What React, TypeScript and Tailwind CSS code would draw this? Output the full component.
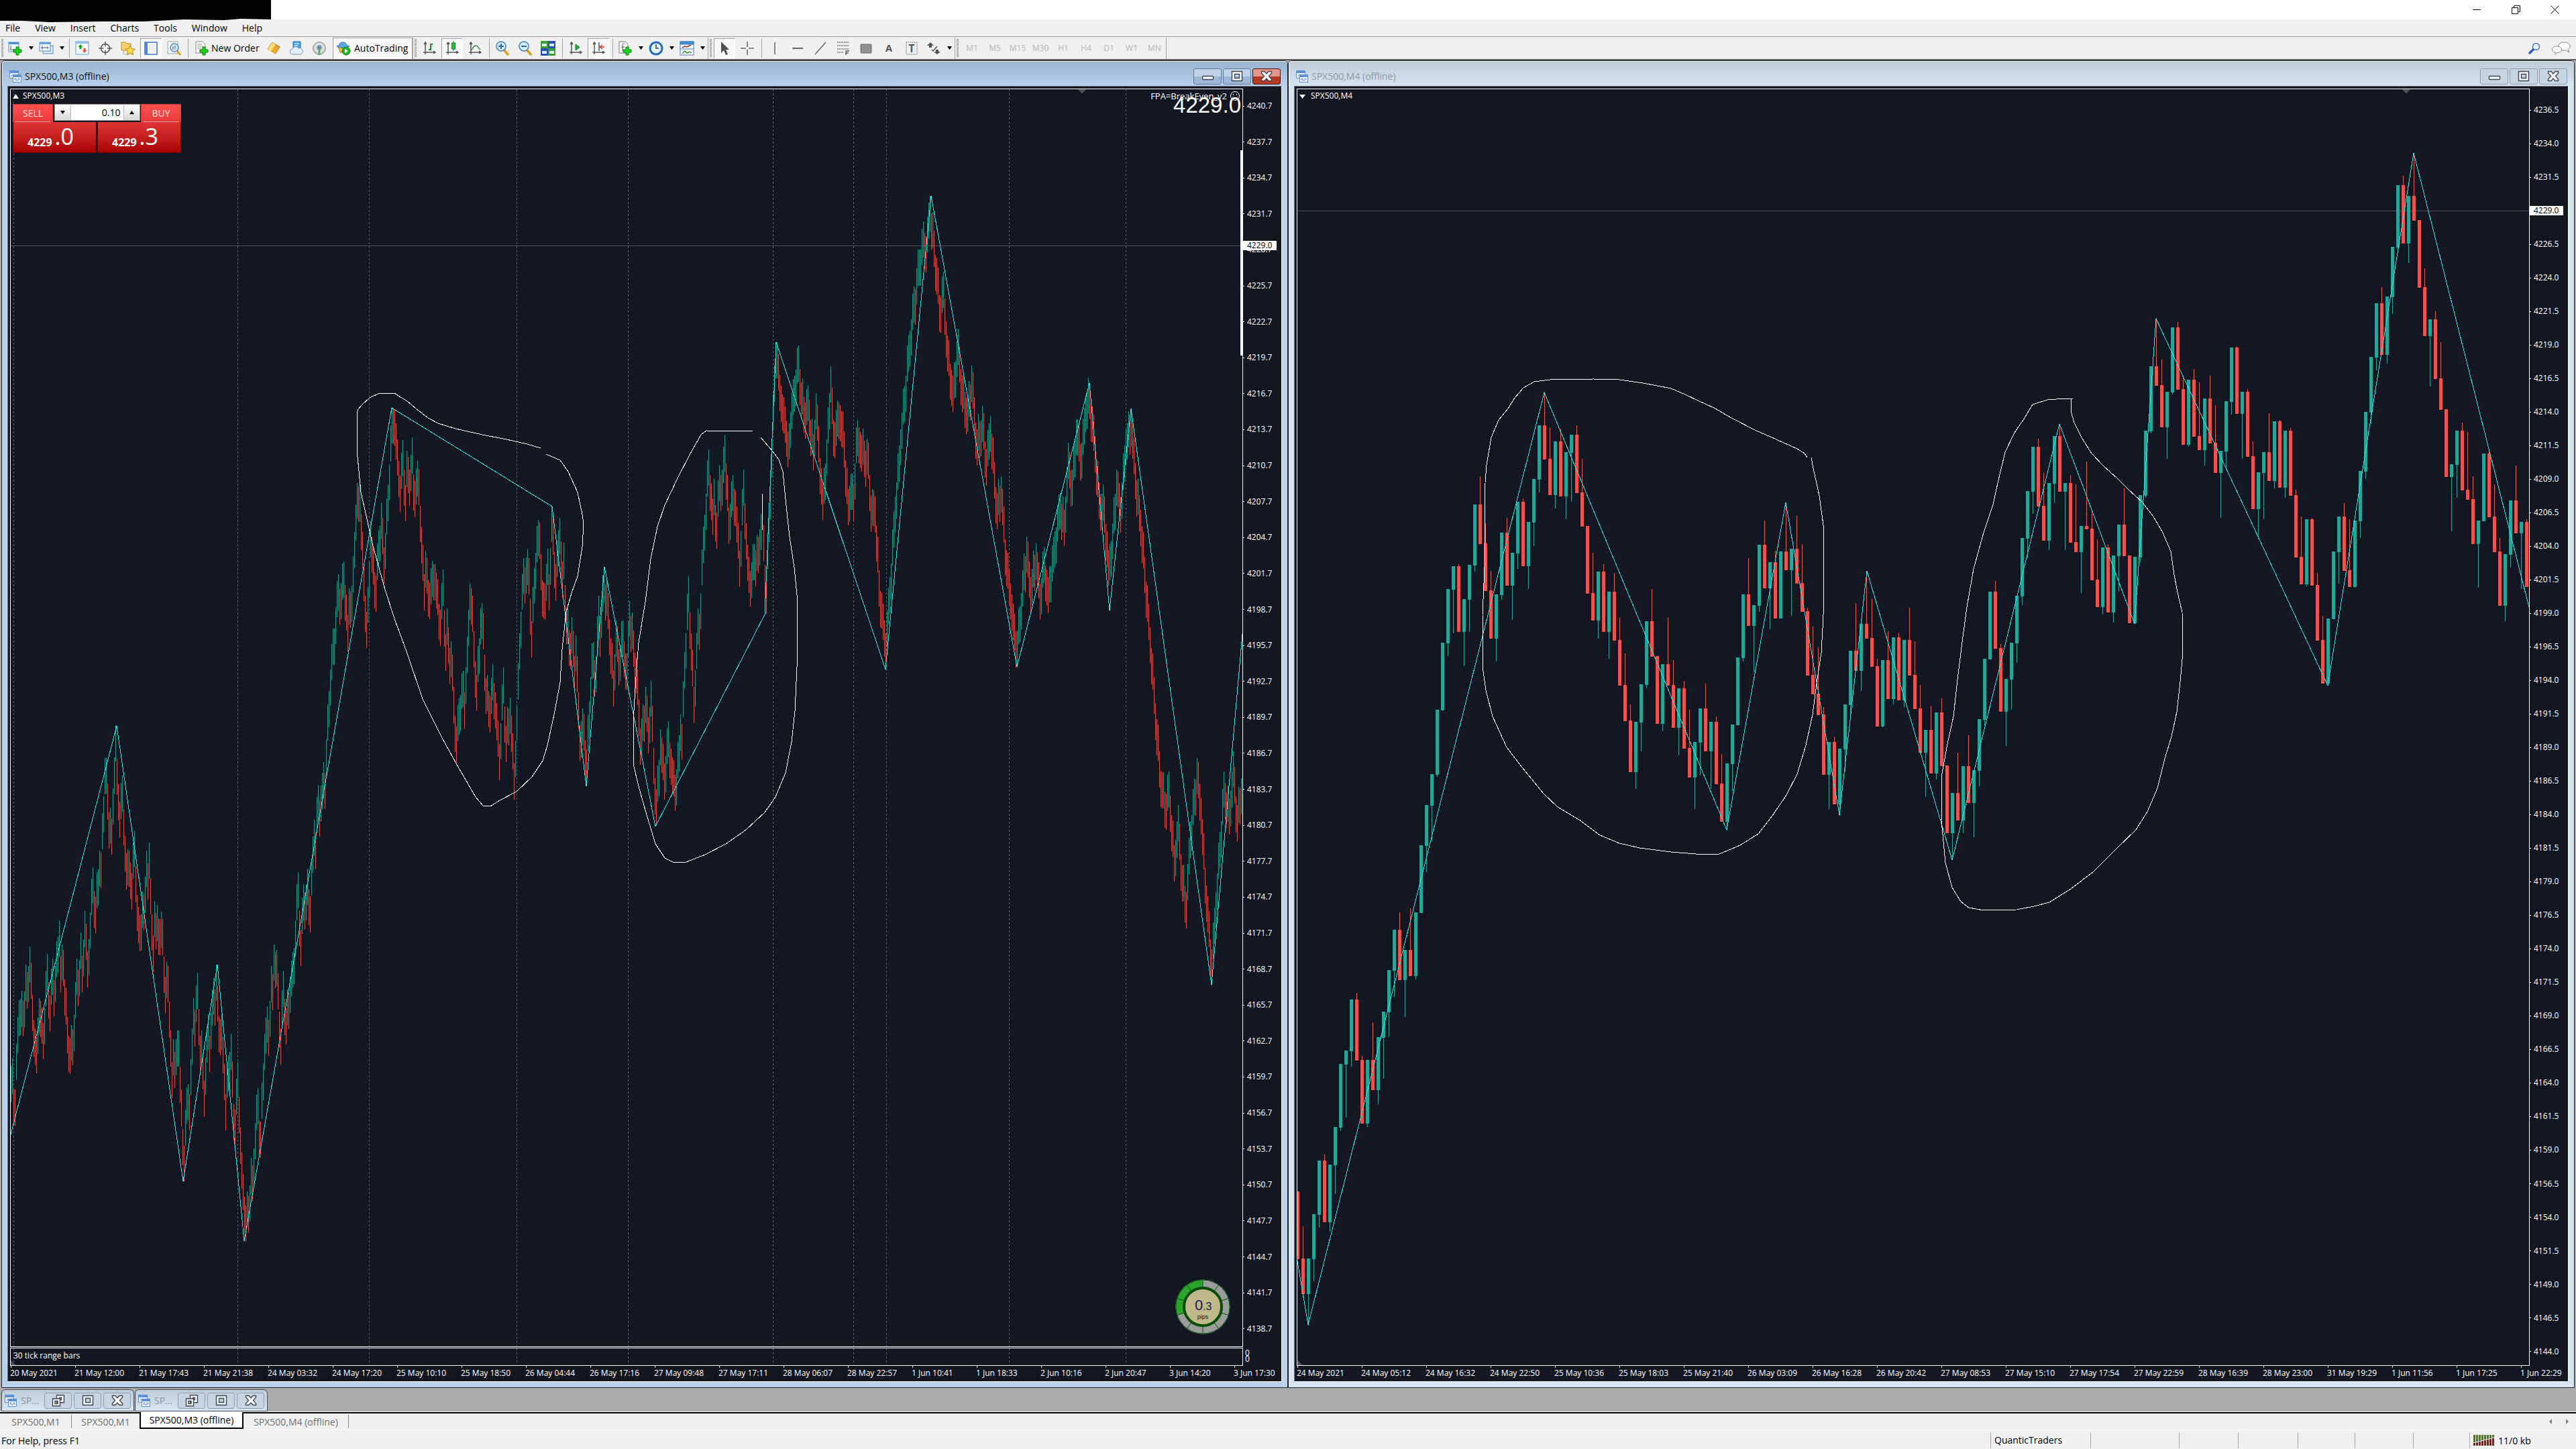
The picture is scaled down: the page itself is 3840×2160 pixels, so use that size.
import clsx from "clsx";
import type { ReactNode } from "react";

const UP = "#26a69a";
const DOWN = "#ef5350";
const ZIGZAG = "#35e0e2";

const M4_CLOSES = [
  1876, 1928, 1876, 1810, 1730, 1821, 1736, 1680, 1586, 1566, 1490, 1580, 1674, 1580, 1624, 1546, 1508, 1446, 1386, 1460,
  1416, 1454, 1360, 1260, 1200, 1154, 1058, 958, 878, 844, 941, 893, 842, 752, 810, 880, 951, 886, 794, 872, 824, 748,
  843, 778, 714, 634, 684, 737, 658, 739, 674, 648, 734, 784, 884, 924, 852, 941, 882, 954, 1021, 1074, 1150, 1076, 1020,
  926, 978, 1078, 990, 1021, 1084, 1026, 1115, 1158, 1106, 1056, 1119, 1076, 1168, 1224, 1138, 1080, 980, 886, 932, 902,
  812, 876, 838, 921, 822, 849, 818, 869, 911, 1006, 1034, 1065, 1154, 1106, 1198, 1116, 1050, 970, 999, 930, 951, 993,
  1082, 984, 1041, 950, 1043, 954, 1006, 1056, 1121, 1088, 1152, 1062, 1141, 1241, 1182, 1222, 1142, 1196, 1148, 1072,
  982, 882, 966, 1060, 1012, 958, 888, 802, 732, 666, 754, 805, 720, 650, 732, 720, 808, 822, 784, 788, 864, 904, 816,
  912, 828, 782, 828, 928, 830, 738, 642, 546, 574, 636, 584, 488, 580, 662, 566, 650, 670, 594, 660, 704, 672, 598, 518,
  616, 584, 680, 758, 704, 674, 716, 628, 726, 642, 738, 830, 870, 774, 872, 954, 1018, 922, 822, 770, 850, 874, 776,
  702, 614, 532, 452, 528, 442, 368, 276, 362, 292, 328, 428, 500, 476, 564, 610, 710, 692, 642, 730, 744, 810, 776, 676,
  770, 822, 902, 826, 746, 794, 778, 874,
];

// x, high pairs of the M3 range bars
const M3_HIGHS = [
  16, 1589, 18, 1577, 20, 1622, 22, 1624, 26, 1516, 28, 1491, 34, 1491, 38, 1438, 40, 1449, 44, 1411, 48, 1483, 52, 1533,
  54, 1546, 58, 1488, 62, 1502, 64, 1525, 70, 1422, 74, 1484, 78, 1429, 80, 1461, 88, 1372, 90, 1425, 94, 1416, 100, 1516,
  104, 1547, 108, 1534, 114, 1429, 116, 1446, 120, 1390, 122, 1425, 126, 1358, 130, 1418, 138, 1293, 142, 1337, 148, 1268,
  150, 1270, 156, 1130, 158, 1129, 160, 1168, 162, 1211, 164, 1204, 166, 1220, 170, 1129, 172, 1081, 174, 1131, 178, 1195,
  182, 1156, 184, 1206, 188, 1272, 192, 1268, 196, 1302, 198, 1256, 200, 1238, 202, 1291, 204, 1334, 210, 1363, 212, 1329,
  214, 1333, 218, 1268, 220, 1287, 222, 1256, 224, 1309, 226, 1363, 228, 1395, 230, 1343, 232, 1361, 240, 1359, 242, 1370,
  246, 1456, 250, 1440, 252, 1493, 256, 1583, 258, 1549, 260, 1568, 266, 1536, 268, 1590, 272, 1683, 274, 1708, 276, 1654,
  280, 1616, 282, 1631, 286, 1533, 288, 1488, 290, 1506, 294, 1450, 296, 1504, 298, 1544, 300, 1536, 304, 1611, 306, 1577,
  310, 1511, 312, 1544, 318, 1458, 320, 1475, 322, 1438, 326, 1515, 330, 1511, 334, 1586, 336, 1631, 338, 1583, 344, 1541,
  348, 1646, 350, 1654, 354, 1583, 356, 1635, 360, 1718, 364, 1784, 366, 1797, 370, 1783, 374, 1726, 376, 1737, 382, 1631,
  384, 1622, 386, 1670, 388, 1672, 394, 1541, 398, 1500, 400, 1520, 404, 1440, 406, 1452, 408, 1408, 412, 1416, 418, 1533,
  422, 1447, 426, 1503, 432, 1456, 438, 1413, 442, 1318, 444, 1300, 448, 1386, 452, 1318, 456, 1318, 458, 1295, 462, 1336,
  466, 1247, 468, 1222, 470, 1241, 472, 1188, 474, 1170, 476, 1193, 480, 1152, 482, 1136, 484, 1152, 486, 1102, 488, 1050,
  494, 960, 500, 906, 502, 866, 504, 856, 508, 869, 512, 837, 514, 872, 518, 917, 520, 877, 524, 873, 528, 793, 530, 752,
  532, 720, 536, 724, 538, 766, 542, 843, 546, 912, 548, 875, 552, 777, 554, 800, 560, 858, 564, 790, 568, 749, 572, 816,
  578, 723, 582, 634, 584, 607, 588, 611, 592, 655, 596, 709, 600, 656, 604, 723, 606, 672, 610, 700, 614, 652, 616, 707,
  620, 698, 624, 699, 628, 786, 632, 856, 634, 822, 638, 865, 644, 836, 648, 841, 656, 909, 660, 849, 664, 946, 666, 907,
  670, 966, 672, 956, 676, 1024, 680, 1083, 684, 1041, 690, 1000, 692, 1032, 696, 949, 700, 870, 704, 888, 706, 941, 710, 1006,
  716, 907, 720, 914, 724, 1011, 730, 1038, 734, 990, 738, 1032, 744, 1109, 750, 995, 754, 1082, 760, 1040, 766, 1138,
  770, 1050, 774, 944, 780, 832, 788, 832, 792, 926, 796, 846, 800, 784, 804, 779, 808, 865, 812, 870, 816, 818, 818, 856,
  822, 754, 828, 841, 834, 772, 838, 837, 840, 809, 844, 907, 850, 944, 852, 920, 856, 978, 858, 947, 864, 1080, 870, 1065,
  874, 1117, 882, 959, 888, 978, 892, 888, 894, 925, 900, 845, 906, 884, 914, 999, 918, 925, 922, 968, 926, 926, 934, 974,
  938, 895, 944, 940, 950, 997, 954, 1086, 960, 1052, 962, 1024, 966, 1069, 970, 1014, 974, 1115, 978, 1177, 982, 1133,
  984, 1087, 990, 1138, 996, 1075, 1002, 1129, 1008, 1147, 1014, 1065, 1016, 1079, 1020, 972, 1026, 859, 1034, 1024,
  1040, 907, 1042, 915, 1048, 785, 1056, 670, 1062, 743, 1064, 714, 1068, 764, 1072, 693, 1076, 700, 1080, 649, 1086, 757,
  1090, 717, 1096, 731, 1102, 821, 1108, 700, 1114, 812, 1118, 851, 1120, 838, 1124, 811, 1130, 800, 1136, 736, 1140, 842,
  1142, 861, 1146, 754, 1150, 657, 1154, 545, 1156, 510, 1160, 528, 1166, 588, 1170, 606, 1174, 643, 1178, 614, 1182, 565,
  1190, 515, 1192, 550, 1198, 591, 1202, 580, 1206, 596, 1212, 647, 1216, 586, 1224, 698, 1226, 721, 1232, 655, 1236, 586,
  1238, 546, 1242, 626, 1246, 611, 1252, 604, 1256, 614, 1264, 729, 1268, 706, 1272, 723, 1276, 637, 1282, 644, 1288, 657,
  1294, 660, 1298, 739, 1304, 740, 1310, 850, 1316, 900, 1320, 944, 1326, 860, 1334, 740, 1342, 640, 1354, 500, 1366, 400,
  1376, 330, 1380, 352, 1386, 292, 1396, 385, 1400, 440, 1406, 405, 1412, 500, 1420, 560, 1428, 490, 1434, 560, 1442, 590,
  1448, 545, 1456, 640, 1464, 605, 1470, 670, 1476, 620, 1486, 735, 1492, 710, 1500, 820, 1506, 870, 1510, 900, 1516, 940,
  1524, 850, 1530, 800, 1536, 860, 1544, 810, 1550, 870, 1556, 815, 1562, 860, 1570, 800, 1580, 735, 1586, 760, 1592, 660,
  1598, 700, 1604, 625, 1612, 660, 1618, 590, 1624, 571, 1632, 650, 1638, 720, 1646, 740, 1652, 820, 1658, 780, 1664, 700,
  1670, 740, 1678, 640, 1686, 612, 1692, 690, 1700, 760, 1706, 830, 1712, 900, 1720, 1010, 1728, 1120, 1736, 1180,
  1742, 1150, 1750, 1260, 1756, 1200, 1762, 1290, 1768, 1330, 1774, 1225, 1784, 1130, 1790, 1190, 1798, 1320, 1806, 1415,
  1812, 1330, 1818, 1240, 1824, 1150, 1832, 1190, 1838, 1120, 1844, 1200, 1850, 1160,
];

const M3_ZIGZAG =
  "16,1691 174,1082 273,1761 324,1438 364,1850 584,608 823,755 874,1172 901,845 977,1232 1140,916 1157,510 1320,998 1388,292 1516,994 1624,571 1654,910 1686,609 1806,1468 1852,945";
const M4_ZIGZAG =
  "1934,1880 1950,1975 2302,585 2574,1237 2662,749 2742,1215 2783,851 2910,1282 3070,632 3182,930 3214,475 3470,1022 3598,228 3770,905";

const M3_STROKES = [
  "806,668 786,662 755,655 719,648 679,639 653,631 638,623 620,609 607,598 597,592 588,586 566,586 551,593 540,603 534,610 532,616 532,670 538,734 546,769 555,810 574,879 589,925 606,971 630,1042 659,1100 680,1138 709,1188 720,1201 731,1202 745,1193 770,1180 793,1158 809,1134 816,1111 826,1065 835,1017 838,968 844,912 852,884 861,859 868,815 870,780 868,767 861,734 847,703 835,686 814,677",
  "1122,643 1053,642 1045,648 1028,678 1010,713 991,753 980,785 970,833 962,897 952,958 948,1009 944,1076 944,1139 952,1172 962,1208 977,1258 991,1279 1003,1285 1023,1285 1051,1274 1082,1258 1112,1237 1140,1211 1156,1188 1171,1152 1180,1106 1185,1060 1188,994 1188,887 1184,846 1177,800 1172,754 1167,703 1161,685 1151,672 1134,652",
  "1136,736 1136,790",
];
const M4_STROKES = [
  "2694,682 2690,676 2679,669 2639,651 2618,642 2581,623 2555,608 2533,598 2512,588 2491,579 2449,571 2414,566 2375,565 2311,566 2287,569 2271,578 2258,593 2248,609 2234,626 2223,652 2216,693 2213,733 2213,846 2210,917 2210,994 2215,1029 2225,1068 2246,1114 2269,1144 2301,1183 2322,1203 2354,1222 2385,1245 2414,1257 2444,1264 2491,1270 2528,1273 2563,1273 2594,1260 2621,1243 2642,1216 2663,1185 2679,1154 2692,1111 2702,1065 2708,1019 2715,973 2718,917 2719,790 2712,739 2703,698 2700,682",
  "3090,595 3078,594 3052,596 3030,603 3018,623 3003,645 2989,674 2978,720 2971,752 2957,794 2942,848 2932,905 2925,957 2918,1013 2912,1068 2903,1109 2895,1153 2894,1223 2900,1286 2910,1323 2923,1344 2935,1353 2957,1357 3006,1356 3032,1351 3055,1345 3087,1325 3121,1299 3156,1264 3184,1237 3201,1210 3216,1175 3227,1131 3237,1098 3245,1061 3250,1016 3254,972 3253,913 3246,883 3241,857 3236,822 3224,794 3210,770 3193,748 3173,730 3156,713 3135,694 3118,676 3104,654 3092,630 3087,613 3087,595",
];

const DAY_LINES = [20, 354, 550, 770, 936, 1152, 1272, 1321, 1504, 1678];

const M3_DATES = [
  "20 May 2021", "21 May 12:00", "21 May 17:43", "21 May 21:38", "24 May 03:32", "24 May 17:20", "25 May 10:10",
  "25 May 18:50", "26 May 04:44", "26 May 17:16", "27 May 09:48", "27 May 17:11", "28 May 06:07", "28 May 22:57",
  "1 Jun 10:41", "1 Jun 18:33", "2 Jun 10:16", "2 Jun 20:47", "3 Jun 14:20", "3 Jun 17:30",
];
const M4_DATES = [
  "24 May 2021", "24 May 05:12", "24 May 16:32", "24 May 22:50", "25 May 10:36", "25 May 18:03", "25 May 21:40",
  "26 May 03:09", "26 May 16:28", "26 May 20:42", "27 May 08:53", "27 May 15:10", "27 May 17:54", "27 May 22:59",
  "28 May 16:39", "28 May 23:00", "31 May 19:29", "1 Jun 11:56", "1 Jun 17:25", "1 Jun 22:29",
];

const M3_PRICES = Array.from({ length: 35 }, (_, i) => (4240.7 - i * 3).toFixed(1));
const M4_PRICES = Array.from({ length: 38 }, (_, i) => (4236.5 - i * 2.5).toFixed(1));

function rangeBars() {
  let up = "";
  let down = "";
  let k = 0;
  let prev = 1640;
  for (let x = 16; x <= 1850; x += 2) {
    while (k + 2 < M3_HIGHS.length && M3_HIGHS[k + 2] <= x) k += 2;
    const x0 = M3_HIGHS[k];
    const y0 = M3_HIGHS[k + 1];
    const x1 = M3_HIGHS[k + 2] ?? x0 + 2;
    const y1 = M3_HIGHS[k + 3] ?? y0;
    const wobble = x === x0 ? 0 : Math.round(Math.sin(x * 2.3) * 14);
    const y = Math.round(y0 + ((y1 - y0) * (x - x0)) / (x1 - x0)) + wobble;
    const bar = `M${x + 0.5} ${y}v54`;
    if (y <= prev) up += bar;
    else down += bar;
    prev = y;
  }
  return { up, down };
}

function Zigzag({ points }: { points: string }) {
  return <polyline points={points} fill="none" stroke={ZIGZAG} strokeWidth="1" />;
}

function Freehand({ strokes }: { strokes: string[] }) {
  return (
    <>
      {strokes.map((points) => (
        <polyline key={points} points={points} fill="none" stroke="#fff" />
      ))}
    </>
  );
}

function DayLines({ top, bottom }: { top: number; bottom: number }) {
  return (
    <>
      {DAY_LINES.map((x) => (
        <path key={x} d={`M${x + 0.5} ${top}V${bottom}`} stroke="#5a5e68" strokeDasharray="3 3" />
      ))}
    </>
  );
}

function M3Plot() {
  const { up, down } = rangeBars();
  return (
    <svg className="block h-full w-full" viewBox="16 133 1836 1874" preserveAspectRatio="none" shapeRendering="crispEdges">
      <DayLines top={133} bottom={2007} />
      <path d="M16 366.5H1852" stroke="#4d515b" />
      <path d="M1606 133h13l-6 6z" fill="#4a4d5c" />
      <path d={up} stroke="#27968d" />
      <path d={down} stroke="#d85152" />
      <Zigzag points={M3_ZIGZAG} />
      <Freehand strokes={M3_STROKES} />
      <path d="M1850.5 224V530" stroke="#fff" strokeWidth="3" />
    </svg>
  );
}

function M4Plot() {
  return (
    <svg className="block h-full w-full" viewBox="1934 133 1836 1902" preserveAspectRatio="none" shapeRendering="crispEdges">
      <path d="M1934 314.5H3770" stroke="#4d515b" />
      <path d="M3580 133h13l-6 6z" fill="#4a4d5c" />
      <path d="M1934 2028v7h7z" fill="#4a4d5c" />
      {M4_CLOSES.map((close, i) => {
        const open = i === 0 ? 1776 : M4_CLOSES[i - 1];
        const rising = close < open;
        const x = 1934 + i * 8;
        const top = rising ? close : close - 100;
        return (
          <g key={x} fill={rising ? UP : DOWN}>
            <rect x={x} y={top} width="1" height="100" />
            <rect x={x - 2} y={Math.min(open, close)} width="5" height={Math.abs(open - close) + 1} />
          </g>
        );
      })}
      <Zigzag points={M4_ZIGZAG} />
      <Freehand strokes={M4_STROKES} />
    </svg>
  );
}

function SpreadGauge() {
  return (
    <svg className="absolute right-[18px] bottom-[18px] size-[82px]" viewBox="-41 -41 82 82">
      <circle r="35" fill="none" stroke="#9c9c9c" strokeWidth="11" />
      <path d="M0-35A35 35 0 0 0-33.3 10.8" fill="none" stroke="#2ba52b" strokeWidth="11" />
      <circle r="40" fill="none" stroke="#0d5a14" />
      {Array.from({ length: 10 }, (_, i) => (
        <path key={i} d="M0-29V-41" stroke="#0d5a14" transform={`rotate(${i * 36})`} />
      ))}
      <circle r="28" fill="#bfb98a" stroke="#064d06" strokeWidth="4" />
      <text x="-12" y="5" fontSize="22" fill="#1c1a5e" fontFamily="Liberation Sans, sans-serif">0</text>
      <text x="0" y="5" fontSize="16" fill="#1c1a5e" fontFamily="Liberation Sans, sans-serif">.3</text>
      <text x="0" y="18" fontSize="9" fill="#111" textAnchor="middle" fontFamily="Liberation Sans, sans-serif">pips</text>
    </svg>
  );
}

function OneClickTrading() {
  return (
    <div className="absolute top-[22px] left-[3px] w-[251px] bg-[#131722] text-[#ffe4e0]">
      <div className="flex h-[27px] items-start justify-between">
        <button type="button" className="h-[27px] w-[60px] border-x border-t border-[#e23b3b] bg-linear-to-b from-[#ff4f4f] to-[#e83a3a] text-[14px] leading-[24px]">
          <span className="mx-[3px] block border-[#ffa0a0] border-b">SELL</span>
        </button>
        <div className="flex h-[25px] w-[128px] border border-[#9a9a9a] bg-white text-black">
          <button type="button" aria-label="Decrease volume" className="w-[24px] border-r border-[#bbb] bg-linear-to-b from-white to-[#d8d8d8]">
            <Caret />
          </button>
          <input aria-label="Volume" defaultValue="0.10" className="w-0 flex-1 bg-white pr-[4px] text-right text-[14px] outline-none" />
          <button type="button" aria-label="Increase volume" className="w-[24px] border-l border-[#bbb] bg-linear-to-b from-white to-[#d8d8d8]">
            <Caret up />
          </button>
        </div>
        <button type="button" className="h-[27px] w-[60px] border-x border-t border-[#e23b3b] bg-linear-to-b from-[#ff4f4f] to-[#e83a3a] text-[14px] leading-[24px]">
          <span className="mx-[3px] block border-[#ffa0a0] border-b">BUY</span>
        </button>
      </div>
      <div className="flex gap-px">
        {["0", "3"].map((pip) => (
          <div
            key={pip}
            className="flex h-[46px] flex-1 items-end justify-center border-x border-b border-[#7d0000] bg-linear-to-b from-[#e03434] to-[#a80000] pr-[12px] pb-[6px] text-white"
          >
            <span className="mr-[4px] font-bold text-[16px] leading-[18px]">4229</span>
            <span className="text-[34px] leading-[36px]">.{pip}</span>
          </div>
        ))}
      </div>
    </div>
  );
}

function Caret({ up = false }: { up?: boolean }) {
  return (
    <svg className="mx-auto block size-[7px]" viewBox="0 0 8 8">
      <path d={up ? "M0 7 4 1l4 6z" : "M0 1h8L4 7z"} fill="#000" />
    </svg>
  );
}

function PriceAxis({ prices, current, className, badge }: { prices: string[]; current: string; className: string; badge: string }) {
  return (
    <div className={clsx("relative flex flex-1 flex-col justify-between", className)}>
      {prices.map((price) => (
        <div key={price} className="flex h-[16px] items-center text-[12px] leading-[16px]">
          <span className="mr-[4px] h-px w-[2px] bg-white" />
          {price}
        </div>
      ))}
      <div className={clsx("absolute left-0 h-[14px] w-[50px] bg-white pl-[6px] text-[12px] text-black leading-[14px]", badge)}>{current}</div>
    </div>
  );
}

function DateAxis({ dates }: { dates: string[] }) {
  return (
    <div className="flex h-[23px] text-[12px] leading-[16px]">
      {dates.map((date) => (
        <div key={date} className="w-[96px] shrink-0 whitespace-nowrap">
          <div className="ml-px h-[3px] w-px bg-white" />
          {date}
        </div>
      ))}
    </div>
  );
}

function ChartIcon({ className }: { className?: string }) {
  return (
    <svg className={clsx("size-[18px] shrink-0", className)} viewBox="0 0 18 18">
      <rect x=".5" y=".5" width="13" height="11" fill="#eaf2ff" stroke="#5b8fd8" />
      <path d="M0 1h14v3H0z" fill="#5b8fd8" />
      <path d="M3 9 5 6l2 2 2-2" fill="none" stroke="#5b8fd8" />
      <rect x="5.5" y="6.5" width="12" height="11" fill="#fff" stroke="#5b8fd8" />
      <path d="M5 7h13v3H5z" fill="#5b8fd8" />
      <path d="M8 15v-3h2v3h3v-3h2v3" fill="none" stroke="#5b8fd8" />
    </svg>
  );
}

function Glyph({ kind }: { kind: "min" | "max" | "close" | "restore" }) {
  return (
    <svg className="mx-auto block h-[18px] w-[20px]" viewBox="0 0 20 18" fill="#fafafa" stroke="#3f4753" strokeWidth="1.4">
      {kind === "min" && <rect x="2.5" y="8.5" width="16" height="5" rx="1" />}
      {kind === "max" && <path fillRule="evenodd" d="M2.5 1.5h15v14h-15zM6.5 5.5h7v6h-7z" />}
      {kind === "restore" && (
        <>
          <path fillRule="evenodd" d="M7.5.7h11v11h-11zM11.5 4.5h3v3h-3z" />
          <path fillRule="evenodd" d="M1.5 6h11v11h-11zM5 9.500h4v4H5z" />
        </>
      )}
      {kind === "close" && <path d="M2.5 1.5H7l3 3.500 3-3.500h4.500V4l-4 4.500 4 4.500v2.500H13L10 12l-3 3.500H2.500V13l4-4.500-4-4.500z" />}
    </svg>
  );
}

interface ChartWindowProps {
  title: string;
  active?: boolean;
  children: ReactNode;
}

function ChartWindow({ title, active = false, children }: ChartWindowProps) {
  const button = clsx(
    "h-[24px] w-[42px] rounded-[3px] border",
    active ? "border-[#5f7a9c] bg-linear-to-b from-[#bfd2e8] from-50% to-[#9db8d6] to-50%" : "border-[#8c9db5] bg-[#c6d4e3]",
  );
  return (
    <section
      className={clsx(
        "flex min-w-0 flex-1 flex-col rounded-t-[6px] border border-[#20242a] px-[8px] pb-[8px]",
        active ? "bg-[#b9d1ea]" : "bg-[#d7e4f2]",
      )}
    >
      <header
        className={clsx(
          "-mx-[8px] flex h-[37px] items-center gap-[2px] rounded-t-[5px] border-white border-t border-l bg-linear-to-b pt-[7px] pr-[10px] pl-[10px]",
          active ? "from-[#99b4d1] to-[#b9d1ea]" : "from-[#bfcddb] to-[#d7e4f2]",
        )}
      >
        <ChartIcon />
        <h2 className={clsx("flex-1 pl-[3px] text-[14px]", active ? "text-[#111]" : "text-[#8e979f]")}>{title}</h2>
        <button type="button" aria-label="Minimize" className={button}>
          <Glyph kind="min" />
        </button>
        <button type="button" aria-label="Maximize" className={button}>
          <Glyph kind="max" />
        </button>
        <button
          type="button"
          aria-label="Close"
          className={active ? "h-[24px] w-[42px] rounded-[3px] border border-[#47141a] bg-linear-to-b from-[#e0978a] from-50% to-[#b93a22] to-50%" : button}
        >
          <Glyph kind="close" />
        </button>
      </header>
      <div className="flex flex-1 flex-col overflow-hidden border border-t-[#6d747c] border-r-white border-b-white border-l-[#6d747c] bg-[#131722] pt-[3px] pl-[3px] text-white">
        {children}
      </div>
    </section>
  );
}

function MinimizedWindow() {
  const button = "h-[24px] w-[41px] rounded-[3px] border border-[#8c9db5] bg-[#c6d4e3]";
  return (
    <section className="flex h-[33px] w-[198px] items-center gap-[3px] rounded-t-[6px] border border-[#4a4f57] bg-linear-to-b from-[#bfcddb] to-[#d7e4f2] px-[4px]">
      <ChartIcon />
      <h2 className="flex-1 pl-[3px] text-[#8e979f] text-[14px]">SP...</h2>
      <button type="button" aria-label="Restore" className={button}>
        <Glyph kind="restore" />
      </button>
      <button type="button" aria-label="Maximize" className={button}>
        <Glyph kind="max" />
      </button>
      <button type="button" aria-label="Close" className={button}>
        <Glyph kind="close" />
      </button>
    </section>
  );
}

const AXES = <path d="M5 2v18M2 17h18M3 5l2-3 2 3M17 15l3 2-3 2" fill="none" stroke="#555" strokeWidth="1.5" />;
const PLUS = <path d="M12 9h4v4h4v4h-4v4h-4v-4H8v-4h4z" fill="#19d619" stroke="#087a08" />;

const ICONS: Record<string, ReactNode> = {
  newChart: (
    <>
      <rect x="1" y="2" width="15" height="14" fill="#eef5fd" stroke="#4f8fcf" />
      <path d="M1 2h15v3H1z" fill="#4f8fcf" />
      <path d="M4 13V7m-1 6h9" stroke="#567" />
      {PLUS}
    </>
  ),
  profiles: (
    <>
      <rect x="6" y="7" width="15" height="12" fill="#d9e9fa" stroke="#4f8fcf" />
      <rect x="1" y="2" width="16" height="13" fill="#eef5fd" stroke="#4f8fcf" />
      <path d="M1 2h16v3H1z" fill="#6aa2da" />
      <path d="M5 7v6m-2-3h11m-2-2 2 2-2 2" fill="none" stroke="#567" />
    </>
  ),
  marketWatch: (
    <>
      <rect x="1" y="1" width="19" height="19" fill="#fff" stroke="#5c9bd4" />
      <path d="M1 1h19v3H1z" fill="#8fc0ea" />
      <path d="m8 5 3.500 4h-2v3h-3V9h-2z" fill="#16a316" />
      <path d="m14 18 3.500-4h-2v-3h-3v3h-2z" fill="#e2502a" />
    </>
  ),
  dataWindow: (
    <g fill="none" stroke="#555" strokeWidth="1.5">
      <circle cx="11" cy="11" r="6.5" />
      <path d="M11 1v7m0 6v7M1 11h7m6 0h7" />
    </g>
  ),
  navigator: (
    <>
      <path d="M1 2h6l2 2h6v10H1z" fill="#f6d36a" stroke="#b78a1e" />
      <path d="M4 15v5h4" fill="none" stroke="#666" strokeDasharray="1 1" />
      <path d="m14 7 2.300 4.500 5 .7-3.600 3.500.8 5-4.500-2.300-4.500 2.300.8-5-3.600-3.500 5-.7z" fill="#ffd84a" stroke="#b07d12" />
    </>
  ),
  terminal: (
    <>
      <rect x="2" y="2" width="18" height="18" fill="#fff" stroke="#3872b8" strokeWidth="1.5" />
      <path d="M2 2h4v18H2z" fill="#4a86cc" />
      <path d="M8 6h10M8 9h10M8 12h10M8 15h10" stroke="#b8cfe8" />
    </>
  ),
  tester: (
    <>
      <path d="M2 1h15v18H2z" fill="#f1f6fb" stroke="#8aa" />
      <circle cx="12" cy="10" r="6" fill="#cfe5f8" stroke="#5e8cb8" strokeWidth="1.5" />
      <path d="m16 15 5 6" stroke="#d8a428" strokeWidth="3" />
      <path d="M10 13V8m3 4V7" stroke="#567" />
    </>
  ),
  newOrder: (
    <>
      <path d="M2 1h10l4 4v13H2z" fill="#fff" stroke="#888" />
      <path d="M4 5h7M4 8h9M4 11h6" stroke="#888" />
      {PLUS}
    </>
  ),
  editor: (
    <>
      <path d="M2 12 9 2l11 7-6 11z" fill="#e6a72e" stroke="#9a6812" />
      <path d="m2 12 7-10 5 3-7 11z" fill="#ffd978" />
      <path d="m3 14 11 6 6-9" fill="none" stroke="#fff3cf" />
    </>
  ),
  market: (
    <>
      <path d="M6 1h11v10H6z" fill="#4aa3ea" stroke="#2272bd" />
      <path d="M8 4h7M8 7h5" stroke="#fff" />
      <path d="M5 20a4 4 0 0 1 0-8 5 5 0 0 1 9-1 4.500 4.500 0 0 1 3 9z" fill="#e5edf6" stroke="#8797b0" />
    </>
  ),
  signals: (
    <>
      <circle cx="11" cy="11" r="9.5" fill="#c3c9cb" stroke="#8b9496" />
      <circle cx="11" cy="10" r="6" fill="none" stroke="#eef1f2" strokeWidth="1.5" />
      <circle cx="11" cy="10" r="3" fill="#5f87a6" />
      <path d="M11 11v10" stroke="#4fae4f" strokeWidth="2.5" />
    </>
  ),
  autoTrading: (
    <>
      <path d="M3 8h14l-2 9H6z" fill="#f0c43c" stroke="#a87b14" />
      <path d="M1 8c2-1 3-1 4-3 1-4 9-4 10 0 1 2 3 2 5 3-5 3-14 3-19 0z" fill="#5ea8e0" stroke="#2f6fa8" />
      <circle cx="15" cy="15" r="6" fill="#25b325" stroke="#0c780c" />
      <path d="m13 12 5 3-5 3z" fill="#fff" />
    </>
  ),
  barChart: (
    <>
      {AXES}
      <path d="M13 4v10M10 13h3m0-8h3" fill="none" stroke="#16902a" strokeWidth="2" />
    </>
  ),
  candleChart: (
    <>
      {AXES}
      <path d="M13 0v15" stroke="#0a7a1c" />
      <rect x="10.5" y="3" width="5" height="9" fill="#22c43a" stroke="#0a7a1c" />
    </>
  ),
  lineChart: (
    <>
      {AXES}
      <path d="M5 14c3-1 3-7 7-7s4 4 7 6" fill="none" stroke="#3b8e45" strokeWidth="1.5" />
    </>
  ),
  zoomIn: (
    <>
      <path d="m13 13 7 8" stroke="#d8a428" strokeWidth="4" />
      <circle cx="9" cy="8" r="7" fill="#d9ecfb" stroke="#3f7fc0" strokeWidth="1.5" />
      <path d="M9 4v8M5 8h8" stroke="#2a66ad" strokeWidth="2" />
    </>
  ),
  zoomOut: (
    <>
      <path d="m13 13 7 8" stroke="#d8a428" strokeWidth="4" />
      <circle cx="9" cy="8" r="7" fill="#d9ecfb" stroke="#3f7fc0" strokeWidth="1.5" />
      <path d="M5 8h8" stroke="#2a66ad" strokeWidth="2" />
    </>
  ),
  tile: (
    <>
      <path d="M0 0h11v11H0zM11 11h11v11H11z" fill="#3aa02c" />
      <path d="M11 0h11v11H11zM0 11h11v11H0z" fill="#2a50b8" />
      <path d="M2 4h7v4H2zM13 4h7v4h-7zM2 15h7v4H2zM13 15h7v4h-7z" fill="#dcebfa" />
    </>
  ),
  autoScroll: (
    <>
      {AXES}
      <path d="m11 5 6 4.500-6 4.500z" fill="#22b03a" stroke="#0a7a1c" />
    </>
  ),
  chartShift: (
    <>
      {AXES}
      <path d="M12 2v13" stroke="#2b62b0" strokeWidth="1.5" />
      <path d="M20 9h-6m3-3-4 3 4 3" fill="none" stroke="#d3401c" strokeWidth="1.5" />
    </>
  ),
  indicators: (
    <>
      <path d="M2 1h9l4 4v13H2z" fill="#fff" stroke="#777" />
      <path d="M10 4c-3-1-3 1-3 4v7M5 9h5" fill="none" stroke="#555" />
      {PLUS}
    </>
  ),
  periods: (
    <>
      <circle cx="11" cy="11" r="9" fill="#e8f3fd" stroke="#1c69be" strokeWidth="3" />
      <path d="M11 5v6h4" fill="none" stroke="#345" strokeWidth="1.5" />
    </>
  ),
  templates: (
    <>
      <rect x="1" y="1" width="20" height="20" fill="#fff" stroke="#3a7cc4" />
      <path d="M1 1h20v4H1zM1 12h20" fill="#4a8bd0" stroke="#3a7cc4" />
      <path d="m4 10 4-2 3 1 6-3" fill="none" stroke="#a02a1a" strokeWidth="1.5" />
      <path d="m4 19 4-4 3 3 4-2 3 2" fill="none" stroke="#249a35" strokeWidth="1.5" />
    </>
  ),
  cursor: <path d="M6 1v17l4-4 3 7 3-1-3-7h5z" fill="#505050" />,
  crosshair: <path d="M11 1v8m0 4v8M1 11h8m4 0h8" stroke="#666" strokeWidth="1.5" />,
  vline: <path d="M11 2v18" stroke="#666" strokeWidth="1.5" />,
  hline: <path d="M3 11h16" stroke="#666" strokeWidth="2" />,
  trendline: <path d="M3 20 19 2" stroke="#666" strokeWidth="1.5" />,
  fibo: (
    <>
      <path d="M2 2h18M2 7h18M2 12h18M2 17h10" stroke="#666" strokeWidth="1.5" strokeDasharray="1.5 1" />
      <path d="M15 21v-6h5m-5 3h4" fill="none" stroke="#555" strokeWidth="1.5" />
    </>
  ),
  rectangle: <rect x="3" y="5" width="16" height="13" rx="1" fill="#909090" stroke="#666" />,
  text: (
    <text x="11" y="16" textAnchor="middle" fontSize="15" fontWeight="700" fill="#555" fontFamily="Open Sans, sans-serif">
      A
    </text>
  ),
  label: (
    <>
      <rect x="3" y="2" width="16" height="18" fill="none" stroke="#555" strokeDasharray="1.5 1.5" />
      <text x="11" y="17" textAnchor="middle" fontSize="16" fontWeight="700" fill="#555" fontFamily="Open Sans, sans-serif">
        T
      </text>
    </>
  ),
  arrows: (
    <>
      <path d="m6 2 5 5H8v3H4V7H1zM16 20l-5-4h3v-3h4v3h3z" fill="#505050" />
      <path d="m8 13 2 2 6-7" fill="none" stroke="#505050" strokeWidth="1.5" />
    </>
  ),
};

function Icon({ name }: { name: string }) {
  return (
    <svg className="size-[22px] shrink-0" viewBox="0 0 22 22">
      {ICONS[name]}
    </svg>
  );
}

function Tool({ name, pressed = false }: { name: string; pressed?: boolean }) {
  return (
    <button
      type="button"
      aria-label={name}
      className={clsx("mr-[2px] flex h-[30px] w-[32px] items-center justify-center border", pressed ? "border-[#a0a0a0] border-r-white border-b-white bg-[#f8f8f8]" : "border-transparent")}
    >
      <Icon name={name} />
    </button>
  );
}

function DropTool({ name }: { name: string }) {
  return (
    <button type="button" aria-label={name} className="flex h-[30px] w-[46px] items-center gap-[4px] pl-[4px]">
      <Icon name={name} />
      <Caret />
    </button>
  );
}

function Separator() {
  return <div className="mx-[3px] h-[28px] w-px bg-[#a8a8a8]" />;
}

function Grip() {
  return <div className="mr-[3px] ml-[2px] h-[27px] w-[3px] bg-[repeating-linear-gradient(#8f8f8f_0_1px,#efefef_1px_2px)]" />;
}

function BarEnd() {
  return <div className="h-[32px] w-px bg-[#a8a8a8]" />;
}

function Toolbar() {
  return (
    <div className="flex h-[36px] items-center border-[#a0a0a0] border-t border-b-2 border-b-[#5f5f5f] bg-[#f0f0f0]">
      <Grip />
      <DropTool name="newChart" />
      <DropTool name="profiles" />
      <Separator />
      <Tool name="marketWatch" />
      <Tool name="dataWindow" />
      <Tool name="navigator" />
      <Tool name="terminal" pressed />
      <Tool name="tester" />
      <Separator />
      <button type="button" className="flex h-[30px] w-[108px] items-center gap-[3px] whitespace-nowrap pl-[6px] text-[14px]">
        <Icon name="newOrder" />
        New Order
      </button>
      <Tool name="editor" />
      <Tool name="market" />
      <Tool name="signals" />
      <button type="button" className="ml-[2px] flex h-[32px] w-[119px] items-center gap-[5px] border border-[#a0a0a0] border-b-white bg-[#f8f8f8] pl-[4px] text-[14px]">
        <Icon name="autoTrading" />
        AutoTrading
      </button>
      <BarEnd />
      <Grip />
      <Tool name="barChart" />
      <Tool name="candleChart" pressed />
      <Tool name="lineChart" />
      <Separator />
      <Tool name="zoomIn" />
      <Tool name="zoomOut" />
      <Tool name="tile" />
      <Separator />
      <Tool name="autoScroll" />
      <Tool name="chartShift" pressed />
      <Separator />
      <DropTool name="indicators" />
      <DropTool name="periods" />
      <DropTool name="templates" />
      <BarEnd />
      <Grip />
      <Tool name="cursor" pressed />
      <Tool name="crosshair" />
      <Separator />
      <Tool name="vline" />
      <Tool name="hline" />
      <Tool name="trendline" />
      <Tool name="fibo" />
      <Tool name="rectangle" />
      <Tool name="text" />
      <Tool name="label" />
      <DropTool name="arrows" />
      <BarEnd />
      <Grip />
      {["M1", "M5", "M15", "M30", "H1", "H4", "D1", "W1", "MN"].map((period) => (
        <button key={period} type="button" disabled className="w-[34px] text-center text-[#b4b4b4] text-[12px]">
          {period}
        </button>
      ))}
      <BarEnd />
      <div className="ml-auto flex items-center gap-[17px] pr-[8px]">
        <button type="button" aria-label="Search">
          <svg className="block h-[18px] w-[18px]" viewBox="0 0 18 18" fill="none">
            <path d="m8 10-6 6" stroke="#2f5cc0" strokeWidth="3.5" strokeLinecap="round" />
            <circle cx="11.5" cy="6.5" r="5" fill="#e9f1fd" stroke="#4a75cf" strokeWidth="1.5" />
          </svg>
        </button>
        <button type="button" aria-label="Chat">
          <svg className="block h-[20px] w-[28px]" viewBox="0 0 28 20" fill="#fcfcfc" stroke="#858585">
            <path d="M18 1c5 0 9 2 9 6 0 2-1 3-2.500 4.500L26 16l-5-3h-3c-5 0-8-2-8-6s3-6 8-6z" />
            <path d="M7.500 7c4 0 7 2 7 5s-3 4.500-7 4.500L5 19v-3c-3-.5-4.500-2-4.500-4 0-3 3-5 7-5z" />
          </svg>
        </button>
      </div>
    </div>
  );
}

function TitleBar() {
  return (
    <div className="flex h-[29px] items-start justify-between bg-white">
      <svg className="block h-[32px] w-[404px] overflow-visible" viewBox="0 0 404 32">
        <path d="M0 0h404v29l-45-1-25 2-60-1-60 3h-60l-80 1-40-2H0z" fill="#020202" />
      </svg>
      <div className="flex pr-[3px]">
        <button type="button" aria-label="Minimize" className="h-[29px] w-[58px]">
          <svg className="mx-auto block size-[13px]" viewBox="0 0 13 13">
            <path d="M0 6.500h12" stroke="#000" />
          </svg>
        </button>
        <button type="button" aria-label="Restore" className="h-[29px] w-[58px]">
          <svg className="mx-auto block size-[13px]" viewBox="0 0 13 13" fill="none" stroke="#000">
            <path d="M.5 3.500h9v9h-9zM3.500 3V.5h9v9H10" />
          </svg>
        </button>
        <button type="button" aria-label="Close" className="h-[29px] w-[58px]">
          <svg className="mx-auto block size-[13px]" viewBox="0 0 13 13" stroke="#000">
            <path d="m.5.5 12 12m0-12-12 12" />
          </svg>
        </button>
      </div>
    </div>
  );
}

function StatusBar() {
  return (
    <footer className="flex h-[28px] items-center bg-[#f0f0f0] pt-[2px] text-[14px]">
      <span className="flex-1 pl-[2px]">For Help, press F1</span>
      <span className="h-[24px] w-[149px] border-[#a8a8a8] border-l pl-[5px] leading-[24px]">QuanticTraders</span>
      <span className="h-[24px] w-[132px] border-[#a8a8a8] border-l" />
      <span className="h-[24px] w-[88px] border-[#a8a8a8] border-l" />
      <span className="h-[24px] w-[89px] border-[#a8a8a8] border-l" />
      <span className="h-[24px] w-[85px] border-[#a8a8a8] border-l" />
      <span className="h-[24px] w-[87px] border-[#a8a8a8] border-l" />
      <span className="h-[24px] w-[84px] border-[#a8a8a8] border-l" />
      <span className="flex h-[24px] w-[159px] items-center gap-[6px] border-[#a8a8a8] border-l pl-[5px]">
        <svg className="h-[16px] w-[31px]" viewBox="0 0 31 16">
          {Array.from({ length: 8 }, (_, i) => (
            <g key={i}>
              <rect x={i * 4} y="0" width="3" height={11 - i} fill="#4e7a1c" />
              <rect x={i * 4} y={12 - i} width="3" height={4 + i} fill="#8a1a0c" />
            </g>
          ))}
        </svg>
        11/0 kb
      </span>
    </footer>
  );
}

export default function App() {
  return (
    <div className="flex min-h-screen flex-col overflow-hidden bg-[#f0f0f0] font-['Open_Sans','Noto_Sans',sans-serif] text-black">
      <TitleBar />
      <nav className="flex h-[25px] items-center gap-[22px] pl-[8px] text-[14px]">
        {["File", "View", "Insert", "Charts", "Tools", "Window", "Help"].map((item) => (
          <button key={item} type="button" className="leading-[20px]">
            {item}
          </button>
        ))}
      </nav>
      <Toolbar />

      <main className="flex flex-1 flex-col gap-[2px] bg-[#ababab] pr-[2px] pl-[2px]">
        <div className="flex flex-1">
          <ChartWindow title="SPX500,M3 (offline)" active>
            <div className="flex flex-1">
              <div className="flex min-w-0 flex-1 flex-col gap-px">
                <div className="relative flex-1 border border-white">
                  <div className="absolute inset-0">
                    <M3Plot />
                  </div>
                  <div className="absolute top-[2px] left-[3px] flex items-center gap-[6px] text-[12px] leading-[16px]">
                    <svg className="size-[9px]" viewBox="0 0 9 9">
                      <path d="M0 8 4.500 1 9 8z" fill="#fff" />
                    </svg>
                    SPX500,M3
                  </div>
                  <OneClickTrading />
                  <div className="absolute top-[2px] right-[4px] flex items-center gap-[5px] text-[13px] leading-[16px]">
                    FPA=BreakEven_v2
                    <svg className="size-[14px]" viewBox="0 0 14 14" fill="none" stroke="#fff">
                      <circle cx="7" cy="7" r="6.5" />
                      <path d="M4.500 4v2m5-2v2M3.500 8.500c1 3 6 3 7 0" />
                    </svg>
                  </div>
                  <div className="absolute top-[4px] right-[2px] font-['Liberation_Sans',sans-serif] text-[33px] leading-[40px]">4229.0</div>
                  <SpreadGauge />
                </div>
                <div className="relative h-[27px] border border-white">
                  <svg className="block h-full w-full" viewBox="16 2010 1836 25" preserveAspectRatio="none" shapeRendering="crispEdges">
                    <DayLines top={2010} bottom={2035} />
                    <path d="M16 2028v7h7z" fill="#4a4d5c" />
                  </svg>
                  <div className="absolute top-[3px] left-[4px] text-[12px] leading-[16px]">30 tick range bars</div>
                </div>
              </div>
              <div className="flex w-[57px] flex-col">
                <PriceAxis prices={M3_PRICES} current="4229.0" className="pt-[18px] pb-[20px]" badge="top-[227px]" />
                <div className="h-[27px] pt-[3px] pl-[3px] text-[12px] leading-[9px]">
                  <div>0</div>
                  <div>0</div>
                </div>
              </div>
            </div>
            <DateAxis dates={M3_DATES} />
          </ChartWindow>

          <ChartWindow title="SPX500,M4 (offline)">
            <div className="flex flex-1">
              <div className="relative min-w-0 flex-1 border border-white">
                <div className="absolute inset-0">
                  <M4Plot />
                </div>
                <div className="absolute top-[2px] left-[3px] flex items-center gap-[8px] text-[12px] leading-[16px]">
                  <svg className="size-[9px]" viewBox="0 0 9 9">
                    <path d="M0 2h9L4.500 8z" fill="#fff" />
                  </svg>
                  SPX500,M4
                </div>
              </div>
              <div className="flex w-[57px] flex-col">
                <PriceAxis prices={M4_PRICES} current="4229.0" className="pt-[24px] pb-[13px]" badge="top-[175px]" />
              </div>
            </div>
            <DateAxis dates={M4_DATES} />
          </ChartWindow>
        </div>
        <div className="flex h-[33px] gap-px">
          <MinimizedWindow />
          <MinimizedWindow />
        </div>
      </main>

      <div className="flex h-[28px] items-start border-white border-t border-b text-[#6f6f6f] text-[14px]">
        <div className="flex h-[26px] flex-1 border-black border-t-2 pl-px">
          <button type="button" className="my-[2px] w-[106px] border-[#8a8a8a] border-r">
            SPX500,M1
          </button>
          <button type="button" className="w-[101px]">SPX500,M1</button>
          <button type="button" className="-mt-[2px] h-[25px] w-[155px] border-2 border-black border-t-0 bg-white text-black">
            SPX500,M3 (offline)
          </button>
          <button type="button" className="my-[2px] w-[157px] border-[#8a8a8a] border-r">
            SPX500,M4 (offline)
          </button>
          <div className="ml-auto flex items-center gap-[21px] pr-[11px]">
            <button type="button" aria-label="Previous tab">
              <svg className="block h-[8px] w-[4px]" viewBox="0 0 4 8">
                <path d="M4 0v8L0 4z" fill="#808080" />
              </svg>
            </button>
            <button type="button" aria-label="Next tab">
              <svg className="block h-[8px] w-[4px]" viewBox="0 0 4 8">
                <path d="M0 0v8l4-4z" fill="#808080" />
              </svg>
            </button>
          </div>
        </div>
      </div>
      <StatusBar />
    </div>
  );
}
